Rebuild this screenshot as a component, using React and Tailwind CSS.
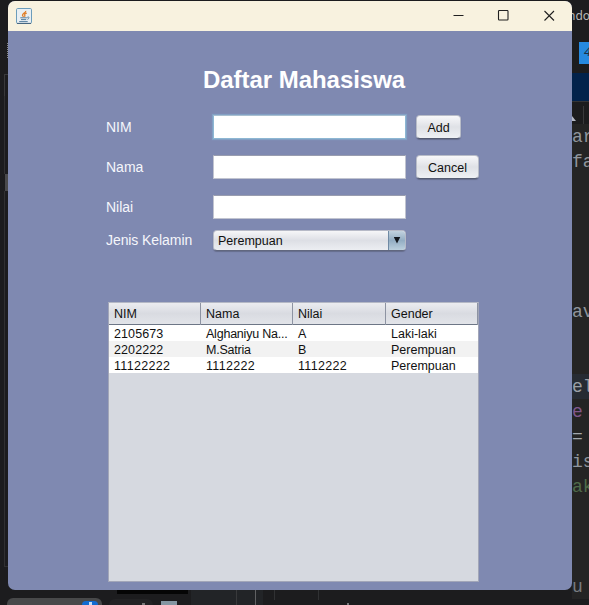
const codeLines = [
  ['ar', 'text-[#8f959d]'],
  ['fa', 'text-[#8f959d]'],
  ['', ''],
  ['', ''],
  ['', ''],
  ['', ''],
  ['', ''],
  ['av', 'text-[#8f959d]'],
  ['', ''],
  ['', ''],
  ['el', 'text-[#9a9fa6] bg-[#262b33]'],
  ['e', 'text-[#81578c]'],
  ['=', 'text-[#a3a8ae]'],
  ['is', 'text-[#8f959d]'],
  ['ak', 'text-[#4f6b4b]'],
  ['', ''],
  ['', ''],
  ['', ''],
  ['u', 'text-[#777b80]'],
];

const rows = [
  ['2105673', 'Alghaniyu Na...', 'A', 'Laki-laki'],
  ['2202222', 'M.Satria', 'B', 'Perempuan'],
  ['11122222', '1112222', '1112222', 'Perempuan'],
];

const columns = 'grid grid-cols-[92px_92px_93px_92px]';

function cellTracking(text, column) {
  if (/^1/.test(text)) return 'tracking-[0.3px]';
  if (/^\d/.test(text)) return 'tracking-[0.1px]';
  return column === 1 ? 'tracking-[-0.22px]' : '';
}

function JavaIcon() {
  return (
    <svg className="ml-2 h-4 w-4 shrink-0" viewBox="0 0 16 16" fill="none">
      <rect x=".5" y=".5" width="15" height="15" rx="1.2" fill="#e9eff3" stroke="#6c9dbb" />
      <path d="M1 15.4h14" stroke="#42617b" />
      <path d="M9.8 2.9C10 4.8 6.3 5.4 6.5 7.2c.1.8.8 1 .9 1.6M10.8 5.2C8.9 5.7 8.2 6.4 8.8 7.3c.3.6.1 1-.3 1.5" stroke="#e0802c" strokeWidth="1.3" />
      <path d="M4.3 9.8h6.6M5 11.6h5.2M3.2 13.6h8.5M11.2 9.3c2.4-1 2.5 1.2.2 2" stroke="#557e9f" />
    </svg>
  );
}

function Desktop() {
  return (
    <div className="flex h-full w-full justify-between bg-[#1c1c1e]">
      <div className="flex h-full w-[400px] flex-col justify-between">
        <div className="flex w-2 flex-col items-end">
          <div className="mt-[43px] h-[15px] w-px border-r border-dotted border-[#888]" />
          <div className="mt-4 h-[22px] w-1 border-l border-t border-[#39393b] pl-[3px] pt-2">
            <div className="h-2 w-px bg-[#8a91a8]" />
          </div>
          <div className="h-[78px] w-1 border-l border-[#303032]" />
          <div className="h-[17px] w-[3px] bg-[#4a4a4c]" />
          <div className="h-[376px] w-1 border-b border-l border-[#303032]" />
        </div>
        <div className="flex h-[15px] items-start">
          <div className="mt-[8px] ml-[7px] flex h-[7px] w-[95px] shrink-0 justify-end rounded-t-md bg-[#48494a] pr-1">
            <div className="mt-[3px] flex h-1 w-4 justify-center rounded-t-full bg-[#126bd1]">
              <div className="mt-px h-[3px] w-[3px] bg-[#c2dcf5]" />
            </div>
          </div>
          <div className="flex h-[15px] w-[86px] shrink-0 flex-col">
            <div className="ml-[15px] h-1 w-[71px] shrink-0 bg-[#050505]" />
            <div className="flex">
              <div className="mt-[5px] ml-[7px] h-1.5 w-[44px] rounded-t-md bg-[#222224] pl-[33px] pt-1">
                <div className="h-1 w-[3px] bg-[#777]" />
              </div>
              <div className="mt-[7px] ml-2 h-1 w-4 bg-[#8496a2]" />
            </div>
          </div>
          <div className="ml-[3px] flex h-full w-[72px] shrink-0 bg-[#222427]">
            <div className="ml-[45px] h-full w-px bg-[#38393b]" />
            <div className="ml-[18px] h-full w-px bg-[#606163]" />
          </div>
          <div className="ml-[11px] h-[10px] w-px shrink-0 bg-[#303133]" />
          <div className="ml-[43px] h-[10px] w-px shrink-0 bg-[#303133]" />
          <div className="ml-[28px] mt-[13px] h-[2px] w-[2px] shrink-0 bg-[#77797c]" />
        </div>
      </div>
      <div className="flex h-full w-[17px] flex-col overflow-hidden">
        <div className="h-[42px] shrink-0 pt-2 font-['Noto_Sans',sans-serif] text-[12px] leading-4 text-[#b8b8b8]">
          <div className="-ml-[4px] whitespace-nowrap">ndow</div>
        </div>
        <div className="ml-[7px] h-[22px] shrink-0 bg-[#2689df] pl-[5px] font-['Noto_Sans',sans-serif] text-[13px] italic leading-[18px] text-[#1d3048]">4</div>
        <div className="h-[9px] shrink-0" />
        <div className="h-7 shrink-0 bg-[#02224b]" />
        <div className="flex h-[23px] shrink-0 border-t border-[#343436]">
          <div className="mt-[14px] h-[5px] w-[4px] bg-[#b6bac6] [clip-path:polygon(0_0,100%_100%,0_100%)]" />
          <div className="ml-[7px] mt-1 h-[18px] w-px bg-[#39393b]" />
        </div>
        <div className="shrink-0 bg-[#242424] font-['Liberation_Mono',monospace] text-[18px]">
          {codeLines.map(([text, tone], i) => (
            <div key={i} className={'h-[25px] leading-[26px] ' + tone}>{text}</div>
          ))}
        </div>
      </div>
    </div>
  );
}

const buttonBase =
  'h-6 rounded-[4px] border border-[#b9bdc8] border-b-[#555c72] bg-linear-to-b from-[#f8f8fa] via-[#dfe1e6] to-[#eff1f4] pt-px text-center shadow-[0_1px_1px_#656d8c] leading-[22px]';

function Field({ label, focused, children }) {
  return (
    <div className="flex h-10 items-start">
      <label className="w-[107px] text-[14px] leading-[25px] text-[#f5f6fb]">{label}</label>
      <input
        className={
          'h-6 w-[193px] border bg-white outline-none ' +
          (focused
            ? 'border-[#8db7d3] border-t-[#a9bfd0] shadow-[0_0_1px_1px_#83a0c4]'
            : 'border-[#c1c4d0] border-t-[#999daf]')
        }
      />
      {children}
    </div>
  );
}

function FormWindow() {
  return (
    <div className="absolute left-2 top-px flex h-[589px] w-[564px] flex-col overflow-hidden rounded-[7px] bg-[#7f89b1]">
      <div className="flex h-[30px] shrink-0 items-center bg-[#f8f2df]">
        <JavaIcon />
        <svg className="ml-auto mr-[17px] h-3 w-[104px]" viewBox="0 0 104 12" fill="none" stroke="#202020" strokeWidth="1.1">
          <path d="M2.5 5.5h10M93.5 1l9.5 9.5M103 1l-9.5 9.5" />
          <rect x="47.5" y="0.5" width="9.5" height="9.5" rx=".8" />
        </svg>
      </div>
      <h1 className="mt-[34px] pl-[195px] text-[24px] font-bold leading-[30px] tracking-[-0.04px] text-white">Daftar Mahasiswa</h1>
      <div className="mt-[20px] pl-[98px]">
        <Field label="NIM" focused>
          <button className={buttonBase + ' ml-[10px] w-[45px]'}>Add</button>
        </Field>
        <Field label="Nama">
          <button className={buttonBase + ' ml-[10px] w-[63px]'}>Cancel</button>
        </Field>
        <Field label="Nilai" />
        <div className="-mt-[6px] flex h-[22px] items-center">
          <span className="w-[107px] text-[14px] leading-[22px] tracking-[-0.08px] text-[#f5f6fb]">Jenis Kelamin</span>
          <div className="flex h-[21px] w-[193px] items-stretch overflow-hidden rounded-[4px] border border-[#b7bac7] border-b-[#61677e] bg-linear-to-b from-[#f6f6f8] via-[#dddfe5] to-[#eceef2] shadow-[0_1px_1px_#656d8c]">
            <span className="grow pl-1 leading-[20px]">Perempuan</span>
            <div className="flex w-[17px] items-center justify-center border-l border-[#6f8aa4] bg-linear-to-b from-[#c2d2df] via-[#93adc3] to-[#bcd0de]">
              <div className="h-[7px] w-[7px] bg-[#14181f] [clip-path:polygon(0_0,100%_0,50%_100%)]" />
            </div>
          </div>
        </div>
      </div>
      <div className="ml-[100px] mt-[51px] h-[280px] w-[371px] border border-[#a2a6b8] border-t-[#b4b8c5] bg-[#d6d9e0]">
        <div className={columns + ' h-[22px] border-b border-[#6d7686] bg-linear-to-b from-[#ebecf0] via-[#d9dbe1] to-[#e2e4e9]'}>
          {['NIM', 'Nama', 'Nilai', 'Gender'].map((name) => (
            <div key={name} className="border-r border-[#8d93a2] pl-[5px] leading-[22px]">{name}</div>
          ))}
        </div>
        {rows.map((row, i) => (
          <div key={i} className={columns + ' h-4 ' + (i === 1 ? 'bg-[#f2f2f2]' : 'bg-white')}>
            {row.map((cell, j) => (
              <div key={j} className={'whitespace-nowrap pl-[5px] leading-[18px] ' + cellTracking(cell, j)}>{cell}</div>
            ))}
          </div>
        ))}
      </div>
    </div>
  );
}

export default function App() {
  return (
    <div className="relative h-[605px] w-[589px] overflow-hidden font-['Liberation_Sans',Arial,sans-serif] text-[12.5px] text-[#111]">
      <Desktop />
      <FormWindow />
    </div>
  );
}
